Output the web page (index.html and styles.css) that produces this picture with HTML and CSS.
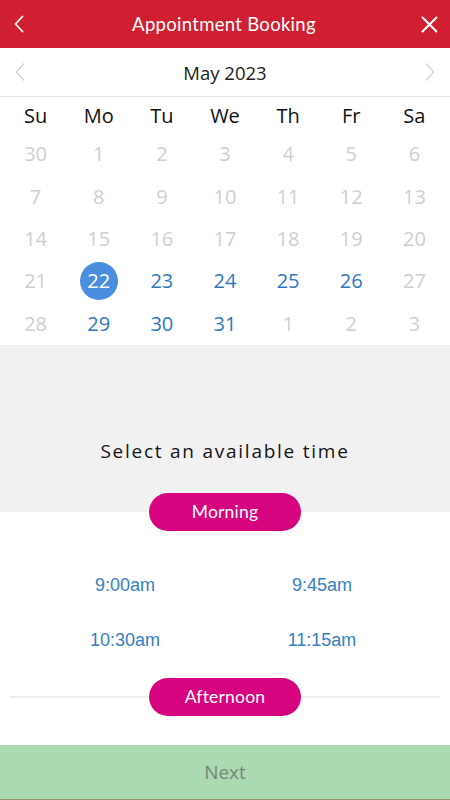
FILE: index.html
```html
<!DOCTYPE html>
<html lang="en">
<head>
<meta charset="utf-8">
<title>Appointment Booking</title>
<link rel="stylesheet" href="styles.css">
</head>
<body>
<div class="app">
  <header class="topbar">
    <button class="icon-btn back" aria-label="Back">
      <svg width="12" height="18" viewBox="0 0 12 18"><path d="M9.5 1.5 L2.5 9 L9.5 16.5" fill="none" stroke="#fff" stroke-width="1.8" stroke-linecap="round" stroke-linejoin="round"/></svg>
    </button>
    <h1 class="title">Appointment Booking</h1>
    <button class="icon-btn close" aria-label="Close">
      <svg width="17" height="17" viewBox="0 0 17 17"><path d="M1.5 1.5 L15.5 15.5 M15.5 1.5 L1.5 15.5" fill="none" stroke="#fff" stroke-width="2" stroke-linecap="round"/></svg>
    </button>
  </header>

  <div class="monthbar">
    <span class="mchev">
      <svg width="12" height="18" viewBox="0 0 12 18"><path d="M9.5 1 L2.5 9 L9.5 17" fill="none" stroke="#d4d4d4" stroke-width="1.4" stroke-linecap="round" stroke-linejoin="round"/></svg>
    </span>
    <span class="month">May 2023</span>
    <span class="mchev">
      <svg width="12" height="18" viewBox="0 0 12 18"><path d="M2.5 1 L9.5 9 L2.5 17" fill="none" stroke="#d4d4d4" stroke-width="1.4" stroke-linecap="round" stroke-linejoin="round"/></svg>
    </span>
  </div>

  <div class="calendar">
    <div class="weekdays">
      <span>Su</span><span>Mo</span><span>Tu</span><span>We</span><span>Th</span><span>Fr</span><span>Sa</span>
    </div>
    <div class="days">
      <span class="d off">30</span><span class="d off">1</span><span class="d off">2</span><span class="d off">3</span><span class="d off">4</span><span class="d off">5</span><span class="d off">6</span>
      <span class="d off">7</span><span class="d off">8</span><span class="d off">9</span><span class="d off">10</span><span class="d off">11</span><span class="d off">12</span><span class="d off">13</span>
      <span class="d off">14</span><span class="d off">15</span><span class="d off">16</span><span class="d off">17</span><span class="d off">18</span><span class="d off">19</span><span class="d off">20</span>
      <span class="d off">21</span><span class="d sel"><span class="dot">22</span></span><span class="d on">23</span><span class="d on">24</span><span class="d on">25</span><span class="d on">26</span><span class="d off">27</span>
      <span class="d off">28</span><span class="d on">29</span><span class="d on">30</span><span class="d on">31</span><span class="d off">1</span><span class="d off">2</span><span class="d off">3</span>
    </div>
  </div>

  <section class="prompt">
    <p class="prompt-text">Select an available time</p>
  </section>

  <div class="period-row first">
    <span class="pill">Morning</span>
  </div>

  <div class="times">
    <a class="time">9:00am</a>
    <a class="time">9:45am</a>
    <a class="time">10:30am</a>
    <a class="time">11:15am</a>
  </div>

  <div class="period-row lined">
    <span class="pill">Afternoon</span>
  </div>

  <div class="spacer"></div>

  <button class="next">Next</button>
</div>
</body>
</html>
```

FILE: styles.css
```css
* { box-sizing: border-box; }
html, body { margin: 0; padding: 0; }
body {
  width: 450px;
  height: 800px;
  overflow: hidden;
  background: #fff;
  font-family: "Open Sans", "Noto Sans", sans-serif;
}
.app {
  display: flex;
  flex-direction: column;
  height: 800px;
}
.topbar {
  height: 48px;
  background: #d01f31;
  display: flex;
  align-items: center;
  justify-content: space-between;
  padding: 0 11px 0 9px;
}
.icon-btn {
  background: none;
  border: 0;
  padding: 0;
  width: 20px;
  height: 20px;
  display: flex;
  align-items: center;
  justify-content: center;
}
.title {
  margin: 0;
  color: #fff;
  font-family: "Lato", "Open Sans", sans-serif;
  font-weight: 400;
  font-size: 18.5px;
  letter-spacing: 0.3px;
}
.monthbar {
  height: 49px;
  border-bottom: 1px solid #e8e8e8;
  display: flex;
  align-items: center;
  justify-content: space-between;
  padding: 0 14px 0 14px;
}
.mchev { display: flex; width: 12px; height: 18px; }
.month {
  font-size: 18.5px;
  color: #222;
}
.calendar {
  padding: 0 4px;
}
.weekdays, .days {
  display: grid;
  grid-template-columns: repeat(7, 1fr);
}
.weekdays {
  height: 36px;
  align-items: center;
}
.weekdays span {
  text-align: center;
  font-size: 20px;
  color: #111;
}
.days { grid-auto-rows: 42.4px; }
.d {
  display: flex;
  align-items: center;
  justify-content: center;
  font-size: 20px;
  font-weight: 400;
  padding-bottom: 1px;
}
.d.off { color: #cfcfcf; }
.d.on { color: #2f78c0; }
.dot {
  width: 38px;
  height: 38px;
  border-radius: 50%;
  background: #4a8fdf;
  color: #fff;
  display: flex;
  align-items: center;
  justify-content: center;
}
.prompt {
  height: 148px;
  background: #f1f1f1;
  display: flex;
  align-items: flex-end;
  justify-content: center;
  padding-bottom: 29px;
}
.prompt-text {
  margin: 0;
  font-size: 19px;
  letter-spacing: 1.75px;
  color: #141414;
}
.period-row {
  height: 38px;
  display: flex;
  align-items: center;
  justify-content: center;
}
.period-row.first {
  background: linear-gradient(#f1f1f1 50%, #fff 50%);
}
.period-row.lined { padding: 0 10px; }
.period-row.lined::before,
.period-row.lined::after {
  content: "";
  flex: 1;
  height: 2px;
  background: #ececec;
}
.pill {
  width: 152px;
  height: 38px;
  border-radius: 19px;
  background: #d6047f;
  color: #fff;
  font-family: "Lato", "Open Sans", sans-serif;
  font-size: 17.5px;
  display: flex;
  align-items: center;
  justify-content: center;
  letter-spacing: 0.2px;
}
.times {
  display: grid;
  grid-template-columns: 250px 144px;
  grid-auto-rows: 55px;
  padding: 27px 0 10px 0;
}
.time {
  display: flex;
  align-items: center;
  justify-content: center;
  font-family: "Liberation Sans", Arial, sans-serif;
  font-size: 18px;
  color: #3580c4;
}
.spacer { flex: 1; }
.next {
  height: 55px;
  border: 0;
  border-bottom: 1px solid #9d9570;
  background: #aadab0;
  color: #7a857b;
  font-family: "Open Sans", sans-serif;
  font-size: 19px;
  padding: 0;
  width: 100%;
}
```
